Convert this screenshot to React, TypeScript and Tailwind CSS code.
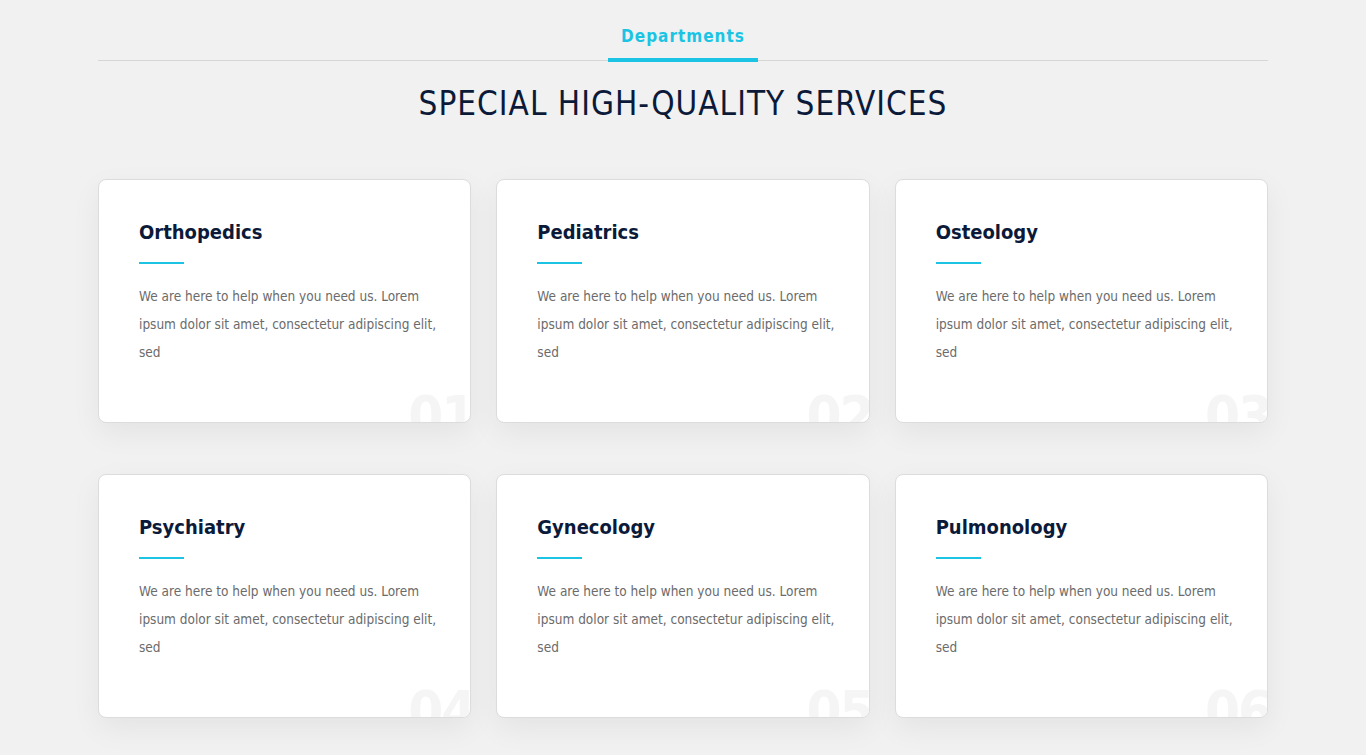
const departments = [
  { title: "Orthopedics", num: "01" },
  { title: "Pediatrics", num: "02" },
  { title: "Osteology", num: "03" },
  { title: "Psychiatry", num: "04" },
  { title: "Gynecology", num: "05" },
  { title: "Pulmonology", num: "06" },
];

const font = { fontFamily: '"DejaVu Sans Condensed", "Liberation Sans", sans-serif' };

function ServiceCard({ title, num }: { title: string; num: string }) {
  return (
    <div className="relative h-[244px] overflow-hidden rounded-lg border border-[#dcdcdc] bg-white pt-[38px] pr-8 pl-10 shadow-[0_10px_30px_rgba(0,0,0,0.06)]">
      <h3 className="text-[20px] leading-[28px] font-bold text-[#0c1a3a]">{title}</h3>
      <div className="mt-[16px] h-[2px] w-[45px] bg-[#1cc4e4]" />
      <p className="mt-[18px] text-[13.5px] leading-[28px] text-[#6b6b6b]">
        We are here to help when you need us. Lorem ipsum dolor sit amet, consectetur adipiscing elit, sed
      </p>
      <span className="absolute right-[-4px] bottom-[-22px] text-[56px] leading-none font-bold tracking-[-2px] text-[#f5f5f5] select-none">
        {num}
      </span>
    </div>
  );
}

export default function App() {
  return (
    <div className="min-h-[755px] bg-[#f1f1f1]" style={font}>
      <div className="mx-auto w-[1170px] pt-[24px]">
        {/* Section tab */}
        <div className="flex justify-center border-b border-[#d6d6d6]">
          <span className="-mb-[2px] w-[150px] border-b-4 border-[#1cc4e4] pb-[10px] text-center text-[17px] leading-[24px] font-bold tracking-[1px] text-[#1cc4e4]">
            Departments
          </span>
        </div>

        <h2 className="mt-[21px] text-center text-[33px] leading-[44px] tracking-[1px] text-[#0c1a3a]">
          SPECIAL HIGH-QUALITY SERVICES
        </h2>

        <div className="mt-[53px] grid grid-cols-3 gap-x-[25px] gap-y-[51px]">
          {departments.map((d) => (
            <ServiceCard key={d.num} title={d.title} num={d.num} />
          ))}
        </div>
      </div>
    </div>
  );
}
